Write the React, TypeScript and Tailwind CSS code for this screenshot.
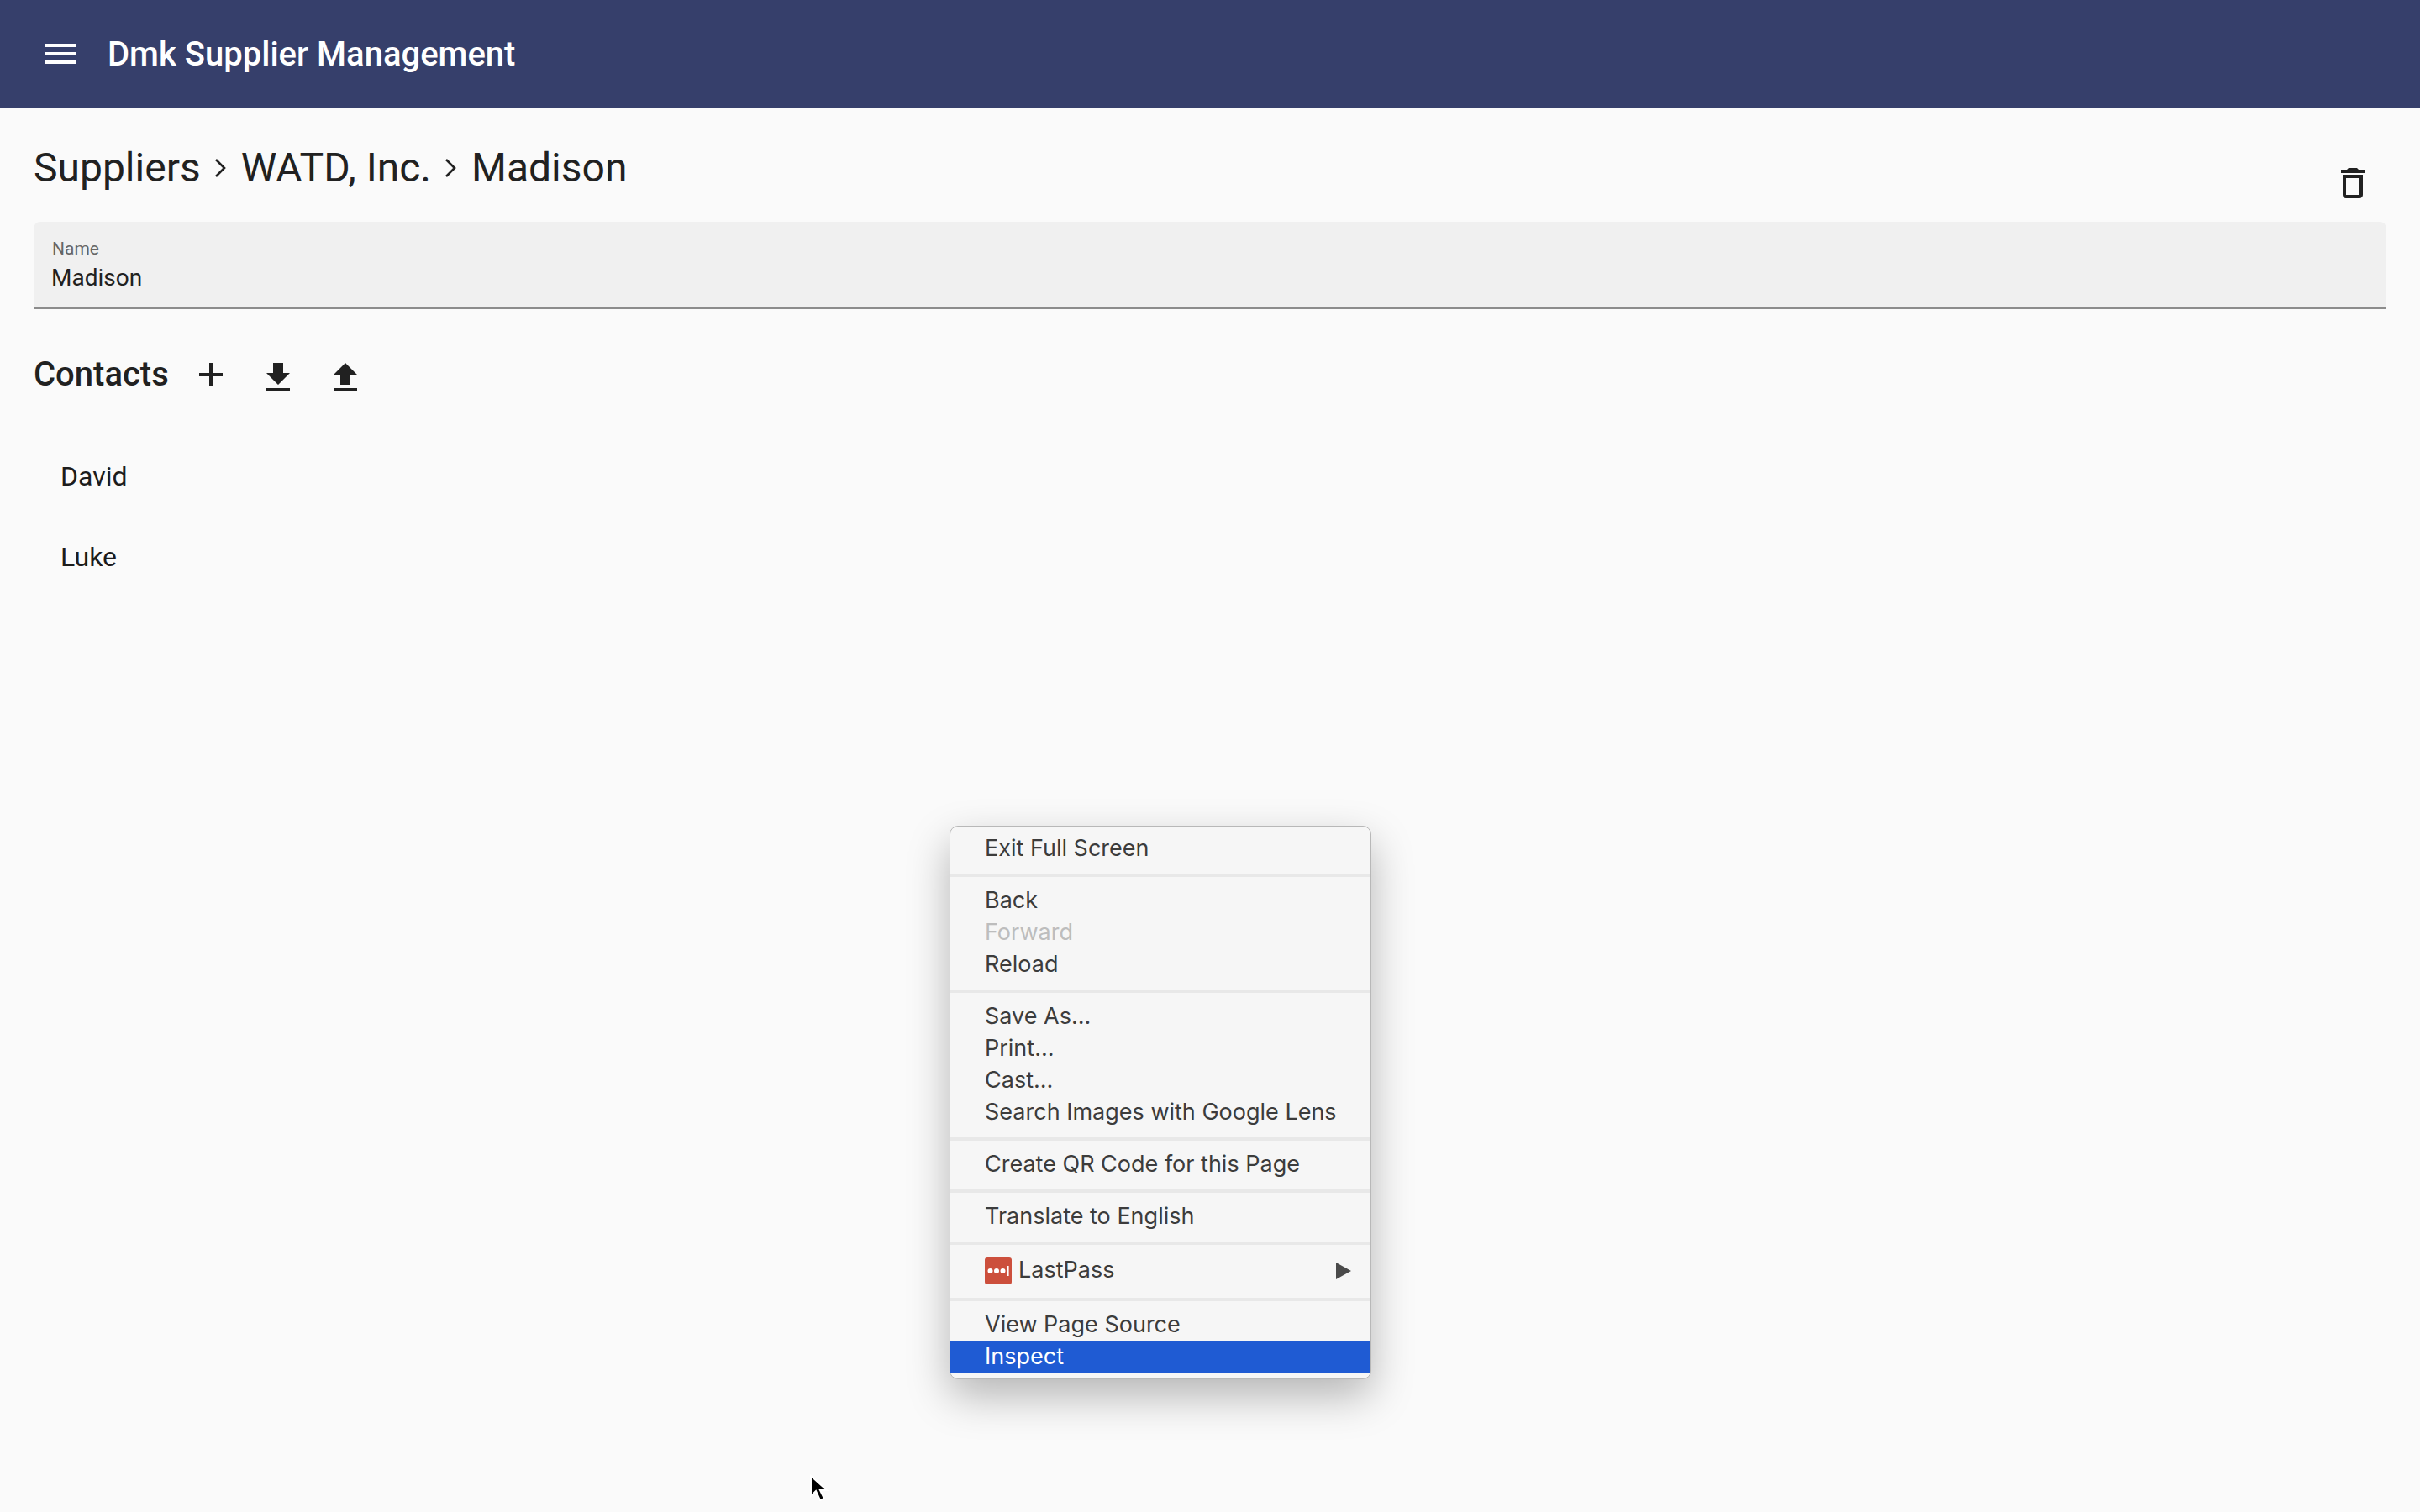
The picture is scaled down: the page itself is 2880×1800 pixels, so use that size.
import React from "react";

type MenuRow = { label: string; disabled?: boolean; active?: boolean };

const menuGroups: MenuRow[][] = [
  [{ label: "Exit Full Screen" }],
  [{ label: "Back" }, { label: "Forward", disabled: true }, { label: "Reload" }],
  [
    { label: "Save As..." },
    { label: "Print..." },
    { label: "Cast..." },
    { label: "Search Images with Google Lens" },
  ],
  [{ label: "Create QR Code for this Page" }],
  [{ label: "Translate to English" }],
];

const MaterialIcon = ({ d, className }: { d: string; className?: string }) => (
  <svg viewBox="0 0 24 24" className={className} fill="currentColor">
    <path d={d} />
  </svg>
);

const Chevron = () => (
  <svg viewBox="0 0 16 24" className="mx-[16px] h-[24px] w-[16px] text-[#212121]" fill="none" stroke="currentColor" strokeWidth="2.6">
    <path d="M2 2l10 10L2 22" />
  </svg>
);

const Row = ({ label, disabled, active }: MenuRow) => (
  <div
    className={`h-[38px] pl-[41px] text-[27px] leading-[38px] ${
      active ? "bg-[#1f5bd3] text-white" : disabled ? "text-[#bdbdbd]" : "text-[#3c3c3c]"
    }`}
  >
    {label}
  </div>
);

const Separator = () => <div className="mt-[11px] mb-[9px] h-[4px] bg-[#e8e8e8]" />;

const ContextMenu = () => (
  <div className="absolute top-[983px] left-[1130px] w-[502px] rounded-[10px] border border-[#b8b8b8] bg-[#f6f6f6] py-[7px] font-['Inter',sans-serif] shadow-[0_20px_50px_rgba(0,0,0,0.28)]">
    {menuGroups.map((group) => (
      <React.Fragment key={group[0].label}>
        {group.map((row) => (
          <Row key={row.label} {...row} />
        ))}
        <Separator />
      </React.Fragment>
    ))}
    <div className="flex h-[43px] items-center pr-[23px] pl-[41px] text-[27px] text-[#3c3c3c]">
      <svg viewBox="0 0 32 32" className="mr-[8px] h-[32px] w-[32px]">
        <rect width="32" height="32" rx="3" fill="#cc4f3c" />
        <circle cx="6.5" cy="16" r="3" fill="#fff" />
        <circle cx="14" cy="16" r="3" fill="#fff" />
        <circle cx="21.5" cy="16" r="3" fill="#fff" />
        <rect x="27" y="10" width="1.6" height="12" fill="#fff" />
      </svg>
      <span>LastPass</span>
      <svg viewBox="0 0 18 20" className="ml-auto h-[20px] w-[18px]">
        <path d="M0 0l18 10L0 20z" fill="#4a4a4a" />
      </svg>
    </div>
    <Separator />
    <Row label="View Page Source" />
    <Row label="Inspect" active />
  </div>
);

const App: React.FC = () => {
  return (
    <div className="relative h-[1800px] overflow-hidden bg-[#fafafa] font-['Roboto',sans-serif] text-[#212121]">
      <header className="flex h-[128px] items-center bg-[#363f6b] pl-[48px] text-white">
        <MaterialIcon d="M3 18h18v-2H3v2zm0-5h18v-2H3v2zm0-7v2h18V6H3z" className="h-[48px] w-[48px]" />
        <h1 className="mt-[2px] ml-[32px] text-[40px] font-medium">Dmk Supplier Management</h1>
      </header>

      <main className="px-[40px]">
        <div className="flex h-[136px] items-start justify-between">
          <div className="mt-[40px] flex items-center text-[48px] leading-[64px]">
            <span>Suppliers</span>
            <Chevron />
            <span>WATD, Inc.</span>
            <Chevron />
            <span>Madison</span>
          </div>
          <MaterialIcon
            d="M6 19c0 1.1.9 2 2 2h8c1.1 0 2-.9 2-2V7H6v12zM8 9h8v10H8V9zm7.5-5l-1-1h-5l-1 1H5v2h14V4z"
            className="mt-[66px] mr-[16px] h-[48px] w-[48px]"
          />
        </div>

        <div className="h-[104px] rounded-t-[8px] border-b-2 border-[#8c8c8c] bg-[#f0f0f0] px-[21px] pt-[16px]">
          <div className="pl-[1px] text-[21px] leading-[32px] text-[#666666]">Name</div>
          <div className="-mt-[1px] text-[28px] leading-[40px]">Madison</div>
        </div>

        <div className="mt-[38px] flex h-[88px] items-center">
          <h2 className="mb-[8px] text-[40px] font-medium">Contacts</h2>
          <div className="ml-[26px] flex gap-[32px]">
            <MaterialIcon d="M19 13h-6v6h-2v-6H5v-2h6V5h2v6h6v2z" className="-mt-[4px] h-[48px] w-[48px]" />
            <MaterialIcon d="M19 9h-4V3H9v6H5l7 7 7-7zM5 18v2h14v-2H5z" className="h-[48px] w-[48px]" />
            <MaterialIcon d="M9 16h6v-6h4l-7-7-7 7h4zm-4 2h14v2H5z" className="h-[48px] w-[48px]" />
          </div>
        </div>

        <ul className="mt-[25px] text-[32px] text-[#1c1c1c]">
          <li className="flex h-[96px] items-center pl-[32px]">David</li>
          <li className="flex h-[96px] items-center pl-[32px]">Luke</li>
        </ul>
      </main>

      <ContextMenu />

      <svg viewBox="0 0 24 36" className="absolute top-[1754px] left-[962px] h-[36px] w-[24px]">
        <path d="M3 3v24l6-6 5 11 5-2-5-10h8z" fill="#000" stroke="#fff" strokeWidth="2" />
      </svg>
    </div>
  );
};

export default App;
